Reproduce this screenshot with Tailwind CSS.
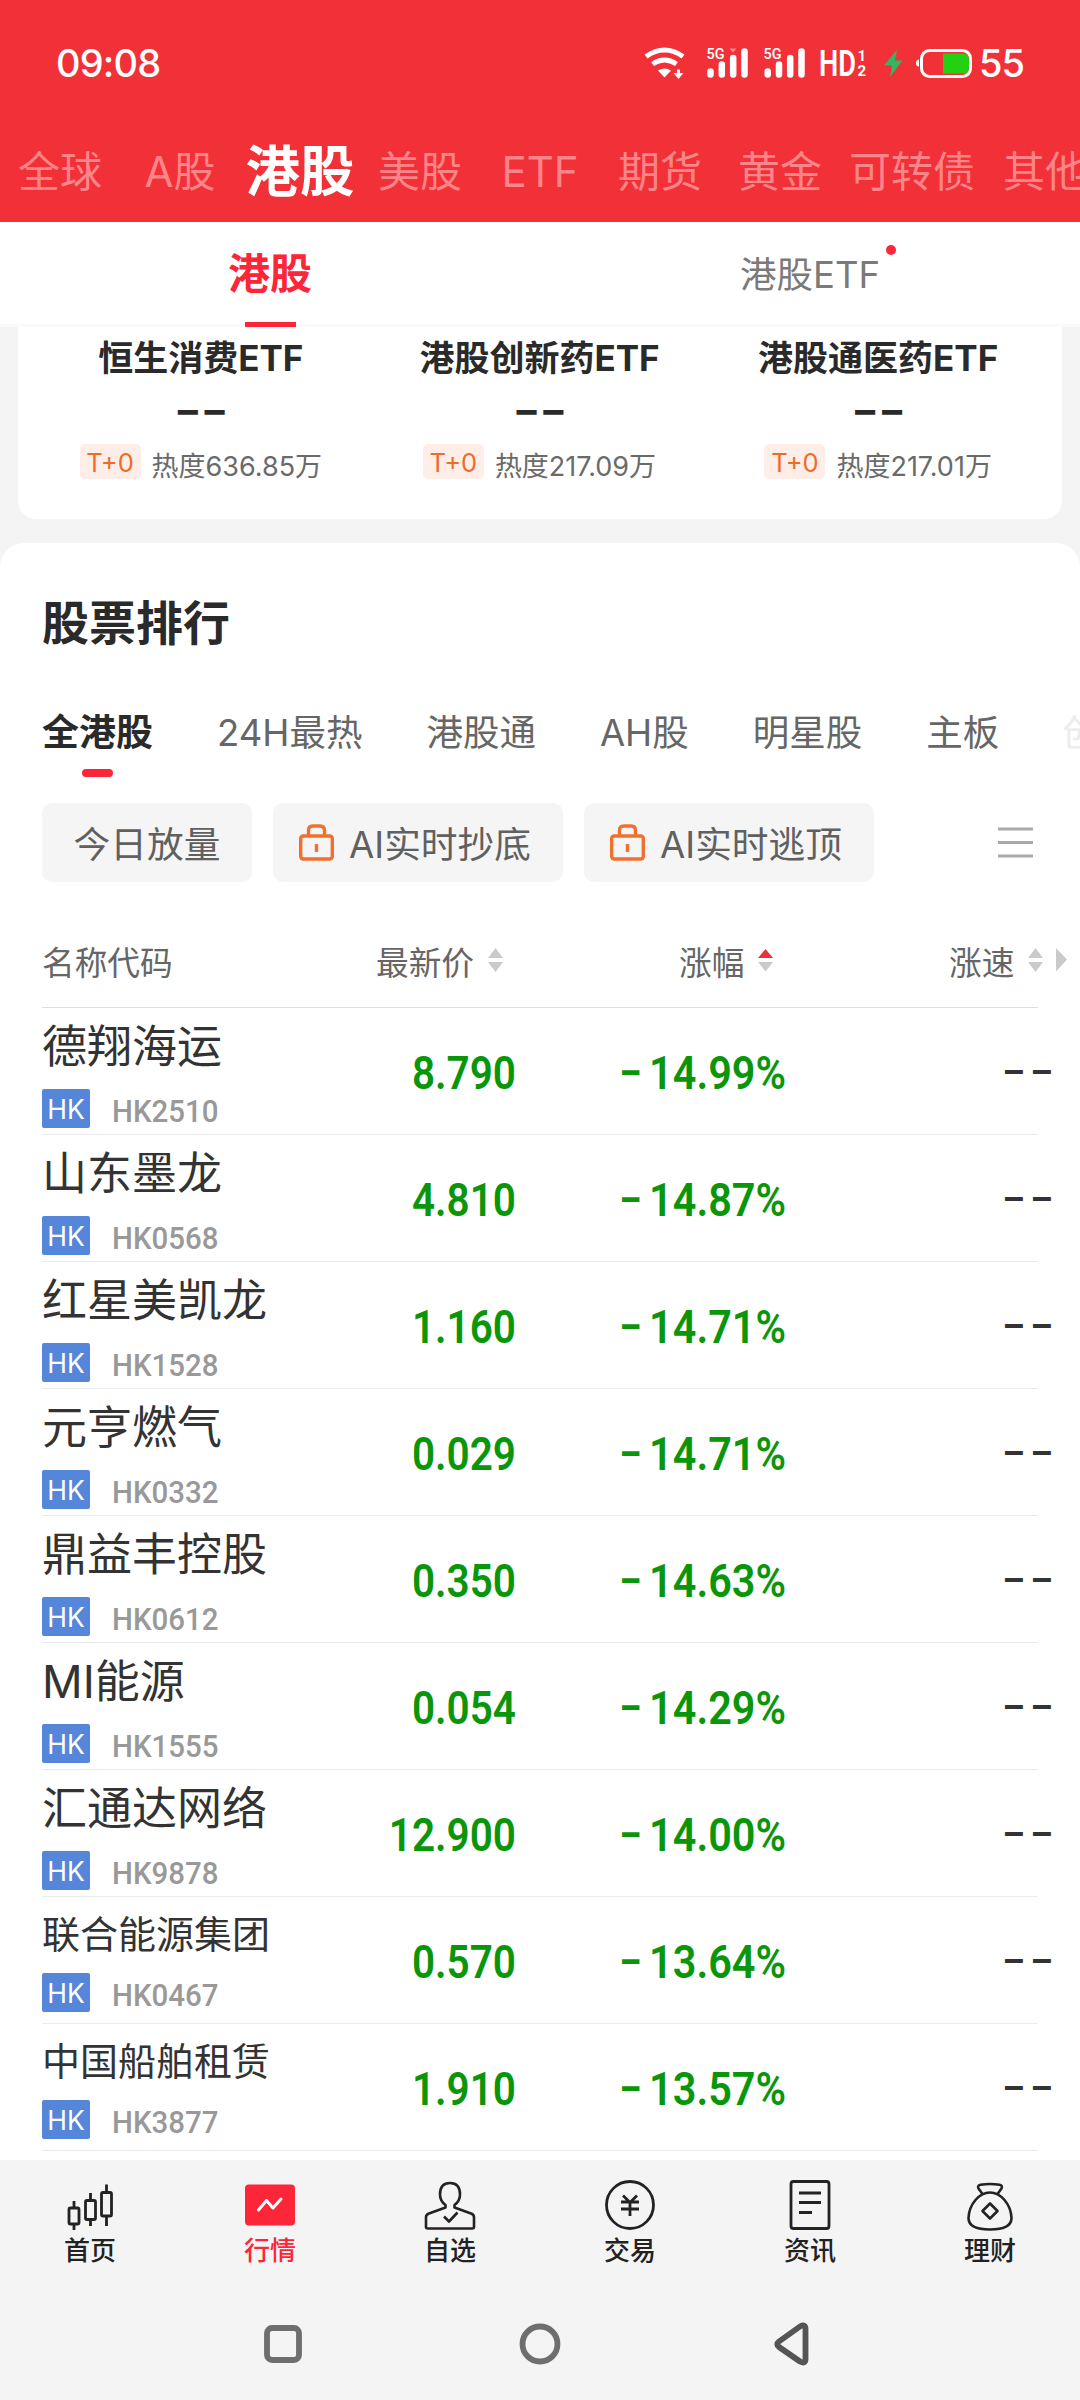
<!DOCTYPE html>
<html lang="zh-CN">
<head>
  <meta charset="UTF-8">
  <title>港股行情</title>
  <script src="https://cdn.jsdelivr.net/npm/@tailwindcss/browser@4"></script>
</head>
<body class="bg-[#f4f4f4] text-[#2a2a2a] font-['Inter','Noto_Sans_CJK_SC',sans-serif]">
  <div class="w-[1080px] h-[2400px] flex flex-col overflow-hidden">

    <header class="bg-[#f23037] h-[222px] shrink-0 text-white">
      <div class="h-[126px] pl-[56px] pr-[56px] flex items-center justify-between">
        <span class="text-[38px] leading-none font-medium tracking-[-0.8px]">09:08</span>
        <!-- wifi, signal, charge and battery -->
        <div class="flex items-center gap-[5px]">
          <svg width="332" height="54" viewBox="0 -9 332 54" fill="none">
            <path d="M4 11.500Q22.500 -1.500 41 11.500" stroke="#fff" stroke-width="5"/>
            <path d="M10.500 19Q22.500 11 34.500 19" stroke="#fff" stroke-width="5"/>
            <path d="M16 25.500q6.500-4 13 0l-6.500 7z" fill="#fff"/>
            <path d="M36.500 24.500v4" stroke="#fff" stroke-width="3"/>
            <path d="M31.500 28h10l-5 6z" fill="#fff"/>
            <g stroke="#fff" stroke-width="6.500" stroke-linecap="round">
              <path d="M68.500 26.500v3M79.800 19.500v10M91.200 13v16.500M102.500 6.500v23"/>
              <path d="M125.700 26.500v3M137 19.500v10M148.200 13v16.500M159.500 6.500v23"/>
            </g>
            <path d="M87.500 3.500h7l-3.500 4z" fill="#f98a8e"/>
            <g fill="#fff" font-family="Roboto">
              <text x="64.500" y="14" font-size="15" font-weight="500" textLength="18" lengthAdjust="spacingAndGlyphs">5G</text>
              <text x="121.500" y="14" font-size="15" font-weight="500" textLength="18" lengthAdjust="spacingAndGlyphs">5G</text>
              <text x="177" y="31" font-size="37" font-weight="600" textLength="37" lengthAdjust="spacingAndGlyphs">HD</text>
              <text x="215.500" y="16" font-size="15" font-weight="700">1</text>
              <text x="215.500" y="31" font-size="15" font-weight="700">2</text>
            </g>
            <path d="M255 4.500L242 20.500h8l-2 11.500 12.500-16.500h-7.500z" fill="#35b560"/>
            <path d="M277 14.500v7q-3 0-3-3.500t3-3.500z" fill="#fff"/>
            <rect x="279.500" y="5.500" width="49" height="26" rx="8" stroke="#fff" stroke-width="3"/>
            <path d="M301 8.500h20q6 0 6 6v8q0 6-6 6h-20z" fill="#24d112"/>
          </svg>
          <span class="text-[38px] leading-none font-medium tracking-[-1px]">55</span>
        </div>
      </div>
      <nav class="h-[91px] flex items-center text-[42px] leading-none text-[#fd8589] whitespace-nowrap">
        <span class="w-[120px] shrink-0 text-center">全球</span>
        <span class="w-[120px] shrink-0 text-center">A股</span>
        <span class="w-[120px] shrink-0 text-center text-[54.500px] font-bold text-white">港股</span>
        <span class="w-[120px] shrink-0 text-center">美股</span>
        <span class="w-[120px] shrink-0 text-center">ETF</span>
        <span class="w-[120px] shrink-0 text-center">期货</span>
        <span class="w-[120px] shrink-0 text-center">黄金</span>
        <span class="w-[144px] shrink-0 text-center">可转债</span>
        <span class="w-[122px] shrink-0 text-center">其他</span>
      </nav>
    </header>

    <div class="h-[105px] shrink-0 bg-white grid grid-cols-2 border-b-[3px] border-[#fafafa]">
      <div class="relative flex justify-center pt-[31px] text-[42px] leading-[42px] font-bold text-[#fd2538]">
        港股
        <i class="absolute -bottom-[3px] w-[51px] h-[5px] bg-[#fd2538]"></i>
      </div>
      <div class="relative flex justify-center pt-[32px] text-[36.500px] leading-[42px] text-[#7a7a7a]">
        港股ETF
        <i class="absolute top-[23px] left-[346px] size-[10px] rounded-full bg-[#fd2538]"></i>
      </div>
    </div>

    <section class="mx-[18px] h-[192px] shrink-0 bg-white rounded-b-[18px] px-[14px] grid grid-cols-3 text-center whitespace-nowrap" id="etfs"></section>

    <section class="mt-[24px] h-[1617px] shrink-0 bg-white rounded-t-[24px] overflow-hidden">
      <h2 class="pl-[42px] pt-[51px] text-[47px] leading-[58px] font-bold">股票排行</h2>
      <div class="mt-[53px] pl-[42px] flex gap-[64px] text-[36.500px] leading-[56px] text-[#666] whitespace-nowrap">
        <span class="relative text-[37px] font-bold text-[#2a2a2a]">全港股<i class="absolute left-[40px] top-[64px] w-[31px] h-[8px] rounded-full bg-[#fd2538]"></i></span>
        <span>24H最热</span>
        <span>港股通</span>
        <span>AH股</span>
        <span>明星股</span>
        <span>主板</span>
        <span class="-ml-[1px] text-[#ececec]">创业板</span>
      </div>
      <div class="mt-[42px] h-[79px] pl-[42px] pr-[47px] flex items-center gap-[21px] text-[36.700px] text-[#606060] whitespace-nowrap">
        <span class="w-[210px] h-[79px] pt-[4px] rounded-[10px] bg-[#f5f5f5] flex items-center justify-center">今日放量</span>
        <span class="w-[290px] h-[79px] pt-[4px] rounded-[10px] bg-[#f5f5f5] flex items-center pl-[26px] gap-[15px]">
          <svg class="-mt-[5px]" width="35" height="37" viewBox="0 0 35 37" fill="none" stroke="#f0702f" stroke-width="3.400"><rect x="1.700" y="12" width="31.600" height="23" rx="2.500"/><path d="M9.500 12V6.500q0-4.500 4.500-4.500h7q4.500 0 4.500 4.500V12M17.500 20v8"/></svg>
          AI实时抄底</span>
        <span class="w-[290px] h-[79px] pt-[4px] rounded-[10px] bg-[#f5f5f5] flex items-center pl-[26px] gap-[15px]">
          <svg class="-mt-[5px]" width="35" height="37" viewBox="0 0 35 37" fill="none" stroke="#f0702f" stroke-width="3.400"><rect x="1.700" y="12" width="31.600" height="23" rx="2.500"/><path d="M9.500 12V6.500q0-4.500 4.500-4.500h7q4.500 0 4.500 4.500V12M17.500 20v8"/></svg>
          AI实时逃顶</span>
        <svg class="ml-auto" width="35" height="31" viewBox="0 0 35 31" stroke="#a9a9a9" stroke-width="3"><path d="M0 2h35M0 15.500h35M0 29h35"/></svg>
      </div>

      <!-- table head -->
      <div class="ml-[42px] w-[996px] h-[126px] pt-[37px] border-b border-[#dedede] flex items-center text-[32.700px] leading-none text-[#666] whitespace-nowrap">
        <span class="w-[334px] shrink-0">名称代码</span>
        <span class="w-[303px] shrink-0 flex items-center gap-[14px]">最新价
          <svg class="-mt-[5px]" width="15" height="24" viewBox="0 0 15 24" fill="#c9cbcb"><path d="M7.500 0L15 10H0zM0 14h15L7.500 24z"/></svg></span>
        <span class="w-[270px] shrink-0 flex items-center gap-[14px]">涨幅
          <svg class="-mt-[5px]" width="15" height="24" viewBox="0 0 15 24" fill="#c9cbcb"><path d="M7.500 1L15 10H0z" fill="#e6343a"/><path d="M0 14h15L7.500 23.500z"/></svg></span>
        <span class="shrink-0 flex items-center gap-[14px]">涨速
          <svg class="-mt-[5px]" width="39" height="24" viewBox="0 0 39 24" fill="#c9cbcb"><path d="M7.500 0L15 10H0zM0 14h15L7.500 24zM28 0v23.500L39 11.500z"/></svg></span>
      </div>
      <div id="rows"></div>
    </section>

    <nav class="h-[120px] shrink-0 grid grid-cols-6 text-[26px] leading-none text-[#222] font-medium text-center">
      <div class="flex flex-col items-center pt-[15px]">
        <svg width="60" height="60" viewBox="0 0 60 60" fill="none" stroke="currentColor" stroke-width="2.800"><rect x="9" y="33" width="10" height="16" rx="1.500"/><path d="M14 26v7M14 49v6"/><rect x="25.500" y="25.500" width="10" height="19" rx="1.500"/><path d="M30.500 18v7M30.500 45v6"/><rect x="41.500" y="17.500" width="10" height="23.500" rx="1.500"/><path d="M46.500 9.500v8M46.500 41v10"/></svg>
        <span class="mt-[3px]">首页</span>
      </div>
      <div class="flex flex-col items-center pt-[15px] text-[#fd2538]">
        <svg width="60" height="60" viewBox="0 0 60 60"><rect x="5" y="9.500" width="50" height="41" rx="4" fill="currentColor"/><path d="M18.500 35l8-9.500 6.500 7.500L41 24" fill="none" stroke="#fff" stroke-width="3" stroke-linecap="round" stroke-linejoin="round"/></svg>
        <span class="mt-[3px]">行情</span>
      </div>
      <div class="flex flex-col items-center pt-[15px]">
        <svg width="60" height="60" viewBox="0 0 60 60" fill="none" stroke="currentColor" stroke-width="2.600" stroke-linejoin="round"><path d="M25.500 32.500V30Q20 26 20 19.500 20 8 30 8T40 19.500Q40 26 34.500 30v2.500L51 38.500q3 1.200 3 3.500v10q0 1.500-2 1.500H8q-2 0-2-1.500V42q0-2.300 3-3.500z"/><path d="M24 41.500l5 5 8.500-9"/></svg>
        <span class="mt-[3px]">自选</span>
      </div>
      <div class="flex flex-col items-center pt-[15px]">
        <svg width="60" height="60" viewBox="0 0 60 60" fill="none" stroke="currentColor" stroke-width="2.800"><circle cx="30" cy="30" r="23.500"/><path d="M23 20.500l7 7 7-7M21 27h18M21 34h18M30 27v14"/></svg>
        <span class="mt-[3px]">交易</span>
      </div>
      <div class="flex flex-col items-center pt-[15px]">
        <svg width="60" height="60" viewBox="0 0 60 60" fill="none" stroke="currentColor" stroke-width="2.800"><rect x="11" y="6.500" width="38" height="47" rx="2.500"/><path d="M19 18h22M19 27.500h22M19 37.500h13"/></svg>
        <span class="mt-[3px]">资讯</span>
      </div>
      <div class="flex flex-col items-center pt-[15px]">
        <svg width="60" height="60" viewBox="0 0 60 60" fill="none" stroke="currentColor" stroke-width="2.600" stroke-linejoin="round"><path d="M22.500 19l-4-5.500q-1.500-3 2-3.700 9.500-1.600 19 0 3.500.7 2 3.700l-4 5.500"/><path d="M30 17.500Q22 17.500 15.500 25T8.500 43Q8.500 54.500 30 54.500T51.500 43Q51 32.500 44.500 25T30 17.500z"/><path d="M30 28.500l7.500 7.500-7.500 7.500-7.500-7.500z"/></svg>
        <span class="mt-[3px]">理财</span>
      </div>
    </nav>

    <!-- system keys -->
    <div class="h-[120px] shrink-0 pt-[42px] pl-[262px] flex gap-[215px]">
      <svg width="42" height="44" viewBox="0 0 42 44" fill="none" stroke="#6e6e6e" stroke-width="5.800"><rect x="5" y="6" width="32" height="32" rx="5"/></svg>
      <svg width="42" height="44" viewBox="0 0 42 44" fill="none" stroke="#6e6e6e" stroke-width="5.800"><circle cx="21" cy="22" r="17.500"/></svg>
      <svg class="-ml-[3px]" width="42" height="44" viewBox="0 0 42 44" fill="none" stroke="#555" stroke-width="5.800" stroke-linejoin="round"><path d="M6 19.500L27 4.500q5.500-3 5.500 2.500v30q0 5.500-5.500 2.500L6 25q-3.500-2.700 0-5.500z"/></svg>
    </div>
  </div>

  <script>
    const etfs = [
      ["恒生消费ETF", "636.85万"],
      ["港股创新药ETF", "217.09万"],
      ["港股通医药ETF", "217.01万"],
    ];

    const stocks = [
      ["德翔海运", "HK2510", "8.790", "14.99%"],
      ["山东墨龙", "HK0568", "4.810", "14.87%"],
      ["红星美凯龙", "HK1528", "1.160", "14.71%"],
      ["元亨燃气", "HK0332", "0.029", "14.71%"],
      ["鼎益丰控股", "HK0612", "0.350", "14.63%"],
      ["MI能源", "HK1555", "0.054", "14.29%"],
      ["汇通达网络", "HK9878", "12.900", "14.00%"],
      ["联合能源集团", "HK0467", "0.570", "13.64%"],
      ["中国船舶租赁", "HK3877", "1.910", "13.57%"],
    ];

    document.getElementById("etfs").innerHTML = etfs.map(([name, heat]) => `
      <div class="flex flex-col items-center -ml-[1px]">
        <div class="mt-[10px] text-[35px] leading-[42px] font-bold">${name}</div>
        <div class="mt-[14px] h-[40px] text-[48px] leading-[40px] font-semibold font-['Roboto']">−−</div>
        <div class="mt-[11px] flex items-start gap-[11px]">
          <span class="w-[61px] h-[35px] rounded-[5px] bg-[#ffeee8] text-[#ee6c28] text-[25.500px] leading-[38px]">T+0</span>
          <span class="text-[27px] leading-[45px] text-[#6a6a6a]">热度${heat}</span>
        </div>
      </div>`).join("");

    document.getElementById("rows").innerHTML = stocks.map(([name, code, price, change]) => `
      <div class="ml-[42px] h-[127px] w-[996px] border-b border-[#ebebeb] flex items-center whitespace-nowrap">
        <div class="w-[282px] shrink-0 h-full flex flex-col">
          <div class="${name.length > 5 ? "text-[38px] h-[76px] leading-[75px]" : "text-[45px] h-[81px] leading-[78px]"} text-[#333]">${name}</div>
          <div class="flex items-start gap-[22px]">
            <span class="w-[48px] h-[39px] rounded-[2px] bg-[#5586d9] text-white text-[26.500px] leading-[41px] text-center">HK</span>
            <span class="inline-block origin-left scale-x-95 text-[31px] leading-[39px] font-medium text-[#999] font-['Roboto'] pt-[3px]">${code}</span>
          </div>
        </div>
        <div class="w-[192px] shrink-0 origin-right scale-x-88 pt-[4px] text-right text-[46px] font-semibold text-[#0a960a] font-['Roboto']">${price}</div>
        <div class="w-[270px] shrink-0 origin-right scale-x-90 pt-[4px] text-right text-[46px] font-semibold text-[#0a960a] font-['Roboto']"><span class="mr-[8px]">−</span>${change}</div>
        <div class="w-[272px] shrink-0 pt-[3px] text-right text-[43px] font-medium tracking-[4px] text-[#333] font-['Roboto']">−−</div>
      </div>`).join("");
  </script>
</body>
</html>
